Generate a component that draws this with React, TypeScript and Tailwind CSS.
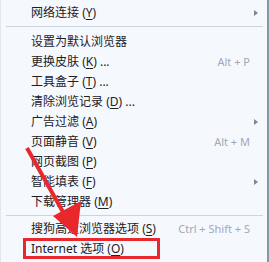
import React from "react";

type Item = {
  label: string;
  key?: string;
  dots?: boolean;
  shortcut?: string;
  sub?: boolean;
};

const groups: Item[][] = [
  [{ label: "网络连接", key: "Y", sub: true }],
  [
    { label: "设置为默认浏览器" },
    { label: "更换皮肤", key: "K", dots: true, shortcut: "Alt + P" },
    { label: "工具盒子", key: "T", dots: true },
    { label: "清除浏览记录", key: "D", dots: true },
    { label: "广告过滤", key: "A", sub: true },
    { label: "页面静音", key: "V", shortcut: "Alt + M" },
    { label: "网页截图", key: "P" },
    { label: "智能填表", key: "F", sub: true },
    { label: "下载管理器", key: "M" },
  ],
  [
    { label: "搜狗高速浏览器选项", key: "S", shortcut: "Ctrl + Shift + S" },
    { label: "Internet 选项", key: "O" },
  ],
];

function Row({ item }: { item: Item }) {
  return (
    <div className="relative flex h-[20px] items-center pl-[30px] pr-[17px]">
      <span className="whitespace-nowrap text-[12px] text-[#1e2024]">
        {item.label}
        {item.key && (
          <>
            {" "}(<span className="underline underline-offset-2">{item.key}</span>)
          </>
        )}
        {item.dots && " ..."}
      </span>
      {item.shortcut && (
        <span className="ml-auto whitespace-nowrap text-[11px] text-[#a3a6ba]">
          {item.shortcut}
        </span>
      )}
      {item.sub && (
        <span className="absolute right-[9px] top-[7px] h-0 w-0 border-y-[3.5px] border-l-[4px] border-y-transparent border-l-[#7d8896]" />
      )}
    </div>
  );
}

export default function App() {
  return (
    <div
      className="relative h-[262px] w-[269px] overflow-hidden border-l border-r-2 border-l-[#dfe6ee] border-r-[#8797ab] bg-[#f5f9fe] pt-[3px]"
      style={{ fontFamily: '"Noto Sans", "Noto Sans CJK SC", sans-serif' }}
    >
      {groups.map((g, gi) => (
        <div key={gi}>
          {gi > 0 && (
            <div className={gi === 1 ? "pb-[5px] pt-[3px]" : "pb-[3px] pt-[3px]"}>
              <div className="ml-[5px] mr-[4px] h-px bg-[#c9d5e1]" />
            </div>
          )}
          {g.map((it) => (
            <Row key={it.label} item={it} />
          ))}
        </div>
      ))}

      {/* red annotation */}
      <div className="absolute left-[22px] top-[238px] h-[21px] w-[137px] border-[3px] border-[#e8282c]" />
      <svg className="absolute left-0 top-0" width="269" height="262">
        <line x1="26" y1="148" x2="62" y2="212" stroke="#e8282c" strokeWidth="4" />
        <polygon points="76,237 52,216 80,201" fill="#e8282c" />
      </svg>
    </div>
  );
}
